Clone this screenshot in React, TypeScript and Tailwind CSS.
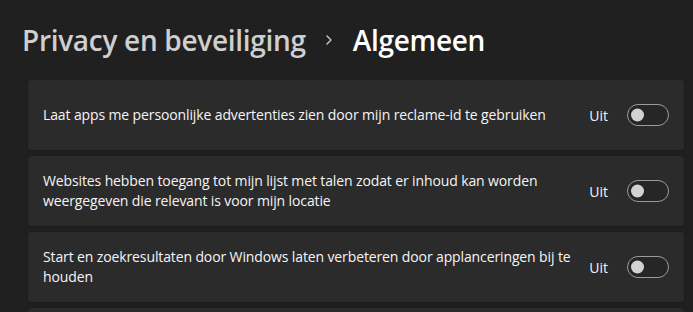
const ROWS = [
  ['Laat apps me persoonlijke advertenties zien door mijn reclame-id te gebruiken'],
  ['Websites hebben toegang tot mijn lijst met talen zodat er inhoud kan worden', 'weergegeven die relevant is voor mijn locatie'],
  ['Start en zoekresultaten door Windows laten verbeteren door applanceringen bij te', 'houden'],
];

function Toggle() {
  return (
    <div className="relative h-[22px] w-[42px] shrink-0 rounded-full border border-[#9b9b9b] bg-[#262626]">
      <div className="absolute left-[3px] top-1/2 h-[13px] w-[13px] -translate-y-1/2 rounded-full bg-[#d2d2d2]" />
    </div>
  );
}

export default function App() {
  return (
    <div className="h-[312px] w-[693px] overflow-hidden bg-[#202020] font-['Open_Sans',sans-serif] text-white">
      <div className="flex items-center pl-[22px] pt-[20px] text-[28px] font-semibold leading-[40px] tracking-[-0.3px]">
        <span className="text-[#cfcfcf]">Privacy en beveiliging</span>
        <svg className="ml-[17px] mr-[18px] h-[12px] w-[12px]" viewBox="0 0 12 12" fill="none">
          <path d="M4 2l4 4-4 4" stroke="#c8c8c8" strokeWidth="1.4" strokeLinecap="round" strokeLinejoin="round" />
        </svg>
        <span className="text-white">Algemeen</span>
      </div>

      <div className="ml-[27px] mr-[8px] mt-[19px] flex flex-col gap-[4px]">
        {ROWS.map((lines, i) => (
          <div
            key={i}
            className="flex h-[72px] items-center rounded-[4px] border border-[#1d1d1d] bg-[#2b2b2b] pl-[15px] pr-[15px]"
          >
            <div className="w-[540px] text-[14px] leading-[20px] tracking-[-0.12px] text-[#f5f5f5]">
              {lines.map((l, j) => (
                <div key={j}>{l}</div>
              ))}
            </div>
            <span className="ml-auto mr-[19px] text-[14px] text-[#f5f5f5]">Uit</span>
            <Toggle />
          </div>
        ))}
        <div className="h-[72px] rounded-[4px] border border-[#1d1d1d] bg-[#2b2b2b]" />
      </div>
    </div>
  );
}
